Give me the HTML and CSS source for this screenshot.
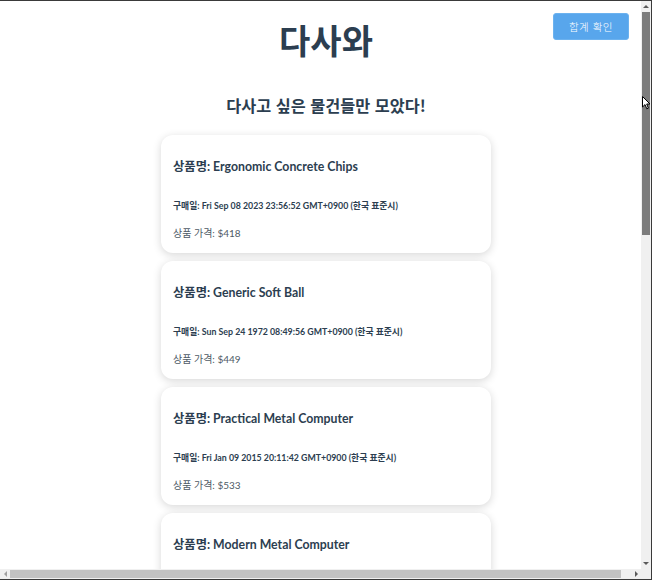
FILE: index.html
```html
<!DOCTYPE html>
<html lang="ko">
<head>
<meta charset="utf-8">
<title>다사와</title>
<link rel="stylesheet" href="styles.css">
</head>
<body>
<div class="window">
  <div class="viewport">
    <div class="page">
      <header class="top">
        <h1 class="title">다사와</h1>
        <button class="sum-btn" type="button">합계 확인</button>
      </header>
      <h2 class="subtitle">다사고 싶은 물건들만 모았다!</h2>
      <ul class="cards">
        <li class="card">
          <h3 class="card-name">상품명: Ergonomic Concrete Chips</h3>
          <p class="card-date">구매일: Fri Sep 08 2023 23:56:52 GMT+0900 (한국 표준시)</p>
          <p class="card-price">상품 가격: $418</p>
        </li>
        <li class="card">
          <h3 class="card-name">상품명: Generic Soft Ball</h3>
          <p class="card-date">구매일: Sun Sep 24 1972 08:49:56 GMT+0900 (한국 표준시)</p>
          <p class="card-price">상품 가격: $449</p>
        </li>
        <li class="card">
          <h3 class="card-name">상품명: Practical Metal Computer</h3>
          <p class="card-date">구매일: Fri Jan 09 2015 20:11:42 GMT+0900 (한국 표준시)</p>
          <p class="card-price">상품 가격: $533</p>
        </li>
        <li class="card">
          <h3 class="card-name">상품명: Modern Metal Computer</h3>
        </li>
      </ul>
    </div>
  </div>
  <div class="vscroll">
    <div class="arrow-box arrow-box-v"><span class="tri tri-up"></span></div>
    <div class="thumb-v"></div>
    <div class="spacer"></div>
    <div class="arrow-box arrow-box-v"><span class="tri tri-down"></span></div>
  </div>
  <div class="hscroll">
    <div class="arrow-box arrow-box-h"><span class="tri tri-left"></span></div>
    <div class="thumb-h"></div>
    <div class="spacer"></div>
    <div class="arrow-box arrow-box-h"><span class="tri tri-right"></span></div>
  </div>
  <div class="corner"></div>
</div>
<svg class="cursor" width="10" height="14" viewBox="0 0 10 14" aria-hidden="true">
  <path d="M0.5 0.5 L0.5 11 L3 8.6 L4.8 12.8 L6.4 12.1 L4.7 8 L8 8 Z" fill="#fff" stroke="#000" stroke-width="1" stroke-linejoin="round"/>
</svg>
</body>
</html>
```
FILE: styles.css
```css
* {
  box-sizing: border-box;
}

html, body {
  margin: 0;
  padding: 0;
  background: #fff;
}

body {
  width: 652px;
  height: 580px;
  overflow: hidden;
  position: relative;
  font-family: "Lato", "Noto Sans CJK KR", sans-serif;
  color: #2c3e50;
}

.window {
  width: 652px;
  height: 580px;
  display: grid;
  grid-template-columns: 641px 10px;
  grid-template-rows: 568px 10px;
  border-top: 1px solid #3a3a3a;
  border-bottom: 1px solid #3a3a3a;
  border-right: 1px solid #3a3a3a;
}

.viewport {
  overflow: hidden;
  background: #fff;
}

.page {
  width: 652px;
  text-align: center;
}

.top {
  display: grid;
  grid-template-columns: 1fr auto 1fr;
  align-items: start;
}

.title {
  grid-column: 2;
  margin: 18px 0 0;
  font-family: "Noto Sans CJK KR", sans-serif;
  font-size: 34px;
  line-height: 41px;
  font-weight: 700;
  color: #2c3e50;
}

.sum-btn {
  grid-column: 3;
  justify-self: end;
  margin: 12px 23px 0 0;
  width: 76px;
  height: 27px;
  padding: 0;
  border: 1px solid #6cb2ef;
  border-radius: 3px;
  background: #58a6ec;
  color: #fff;
  font-family: "Noto Sans CJK KR", sans-serif;
  font-size: 10.5px;
  font-weight: 300;
  letter-spacing: 0.5px;
}

.subtitle {
  margin: 34px 0 0;
  font-family: "Noto Sans CJK KR", sans-serif;
  font-size: 16.3px;
  line-height: 22px;
  font-weight: 700;
  color: #2c3e50;
}

.cards {
  list-style: none;
  margin: 19px auto 0;
  padding: 0;
  width: 330px;
  display: flex;
  flex-direction: column;
  gap: 8px;
  text-align: left;
}

.card {
  height: 118px;
  padding: 24px 12px 0;
  border-radius: 12px;
  background: #fff;
  box-shadow: 0 2px 9px rgba(0, 0, 0, 0.16);
}

.card-name {
  margin: 0;
  font-size: 12.3px;
  line-height: 16px;
  font-weight: 700;
  color: #2c3e50;
}

.card-date {
  margin: 25px 0 0;
  font-size: 8.8px;
  line-height: 12px;
  font-weight: 700;
  color: #2c3e50;
}

.card-price {
  margin: 14px 0 0;
  font-size: 10px;
  line-height: 15px;
  font-weight: 400;
  color: #4e5a66;
}

/* fake browser scrollbars */
.vscroll {
  background: #f0f0f0;
  display: flex;
  flex-direction: column;
  align-items: center;
}

.hscroll {
  background: #f0f0f0;
  display: flex;
  flex-direction: row;
  align-items: center;
}

.corner {
  background: #f0f0f0;
}

.spacer {
  flex: 1;
}

.arrow-box {
  display: flex;
  align-items: center;
  justify-content: center;
  flex: none;
}

.arrow-box-v {
  width: 10px;
  height: 11px;
}

.arrow-box-h {
  width: 10px;
  height: 10px;
}

.thumb-v {
  width: 8px;
  height: 223px;
  background: #7c7c7c;
  flex: none;
}

.thumb-h {
  width: 611px;
  height: 8px;
  background: #c2c2c2;
  flex: none;
}

.tri {
  width: 0;
  height: 0;
  display: block;
}

.tri-up {
  border-left: 3px solid transparent;
  border-right: 3px solid transparent;
  border-bottom: 3px solid #5a5a5a;
}

.tri-down {
  border-left: 3px solid transparent;
  border-right: 3px solid transparent;
  border-top: 3px solid #5a5a5a;
}

.tri-left {
  border-top: 3px solid transparent;
  border-bottom: 3px solid transparent;
  border-right: 3px solid #a0a0a0;
}

.tri-right {
  border-top: 3px solid transparent;
  border-bottom: 3px solid transparent;
  border-left: 3px solid #5a5a5a;
}

.cursor {
  position: absolute;
  left: 642px;
  top: 96px;
}
```
